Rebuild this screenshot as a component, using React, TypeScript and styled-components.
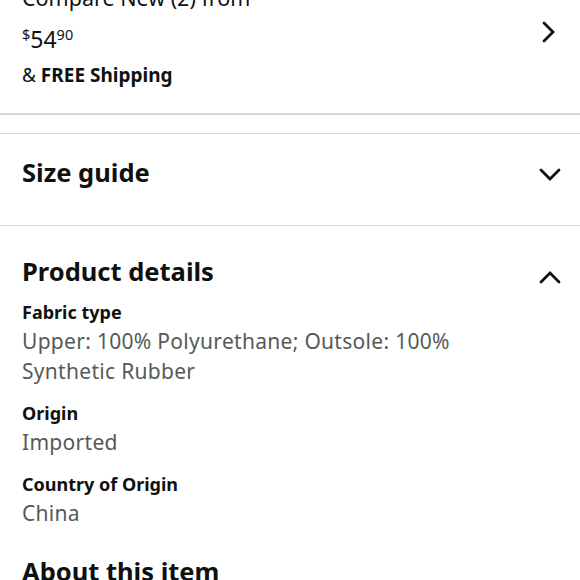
import React from "react";
import styled, { createGlobalStyle } from "styled-components";

const Global = createGlobalStyle`
  html, body { margin: 0; padding: 0; background: #fff; }
  body { font-family: "Noto Sans", "DejaVu Sans", sans-serif; color: #0f1111; }
`;

const Page = styled.div`
  width: 580px;
  margin-top: -16px;
`;

const Offer = styled.div`
  display: flex;
  justify-content: space-between;
  padding: 0 20px 0 22px;
`;

const OfferInfo = styled.div`
  display: flex;
  flex-direction: column;
`;

const CompareText = styled.div`
  font-size: 21.5px;
  line-height: 28px;
`;

const Price = styled.div`
  margin-top: 13px;
  font-size: 23px;
  line-height: 28px;
`;

const Sup = styled.span`
  font-size: 14.5px;
  line-height: 0;
  vertical-align: 8px;
`;

const Shipping = styled.div`
  margin-top: 10px;
  font-size: 19px;
  line-height: 24px;
  b { font-weight: 700; }
`;

const ChevronSlot = styled.div<{ $top: number }>`
  display: flex;
  margin-top: ${(p) => p.$top}px;
  align-self: flex-start;
`;

const ThickRule = styled.div`
  height: 2px;
  background: #d5d9d9;
  margin-top: 26px;
`;

const ThinRule = styled.div<{ $gap?: number }>`
  height: 1px;
  background: #d5d9d9;
  margin-top: ${(p) => p.$gap ?? 0}px;
`;

const Row = styled.div`
  display: flex;
  align-items: center;
  justify-content: space-between;
  padding: 22px 18px 37px 22px;
`;

const Heading = styled.h2`
  margin: 0;
  font-size: 25.5px;
  font-weight: 700;
  line-height: 32px;
`;

const Details = styled.div`
  padding: 29px 18px 0 22px;
`;

const DetailHead = styled.div`
  display: flex;
  justify-content: space-between;
  align-items: flex-end;
`;

const AttrList = styled.div`
  display: flex;
  flex-direction: column;
  gap: 15px;
  padding-top: 13px;
`;

const AttrName = styled.div`
  font-size: 18px;
  font-weight: 700;
  line-height: 24px;
`;

const AttrValue = styled.div`
  margin-top: 2px;
  max-width: 490px;
  font-size: 21px;
  line-height: 30px;
  letter-spacing: 0.3px;
  color: #565959;
`;

const About = styled(Heading)`
  margin-top: 27px;
`;

type Dir = "right" | "down" | "up";

const paths: Record<Dir, string> = {
  right: "M8 3 L17 12 L8 21",
  down: "M3 10 L12 19 L21 10",
  up: "M3 19 L12 10 L21 19",
};

const Chevron = ({ dir }: { dir: Dir }) => (
  <svg
    width="24"
    height="24"
    viewBox="0 0 24 24"
    fill="none"
    stroke="#0f1111"
    strokeWidth="2.8"
    strokeLinecap="round"
    strokeLinejoin="miter"
  >
    <path d={paths[dir]} />
  </svg>
);

const attrs = [
  { name: "Fabric type", value: "Upper: 100% Polyurethane; Outsole: 100% Synthetic Rubber" },
  { name: "Origin", value: "Imported" },
  { name: "Country of Origin", value: "China" },
];

export default function App() {
  return (
    <Page>
      <Global />
      <Offer>
        <OfferInfo>
          <CompareText>Compare New (2) from</CompareText>
          <Price>
            <Sup>$</Sup>54<Sup>90</Sup>
          </Price>
          <Shipping>
            &amp; <b>FREE Shipping</b>
          </Shipping>
        </OfferInfo>
        <ChevronSlot $top={36}>
          <Chevron dir="right" />
        </ChevronSlot>
      </Offer>
      <ThickRule />
      <ThinRule $gap={18} />
      <Row>
        <Heading>Size guide</Heading>
        <Chevron dir="down" />
      </Row>
      <ThinRule />
      <Details>
        <DetailHead>
          <Heading>Product details</Heading>
          <Chevron dir="up" />
        </DetailHead>
        <AttrList>
          {attrs.map((a) => (
            <div key={a.name}>
              <AttrName>{a.name}</AttrName>
              <AttrValue>{a.value}</AttrValue>
            </div>
          ))}
        </AttrList>
        <About>About this item</About>
      </Details>
    </Page>
  );
}
